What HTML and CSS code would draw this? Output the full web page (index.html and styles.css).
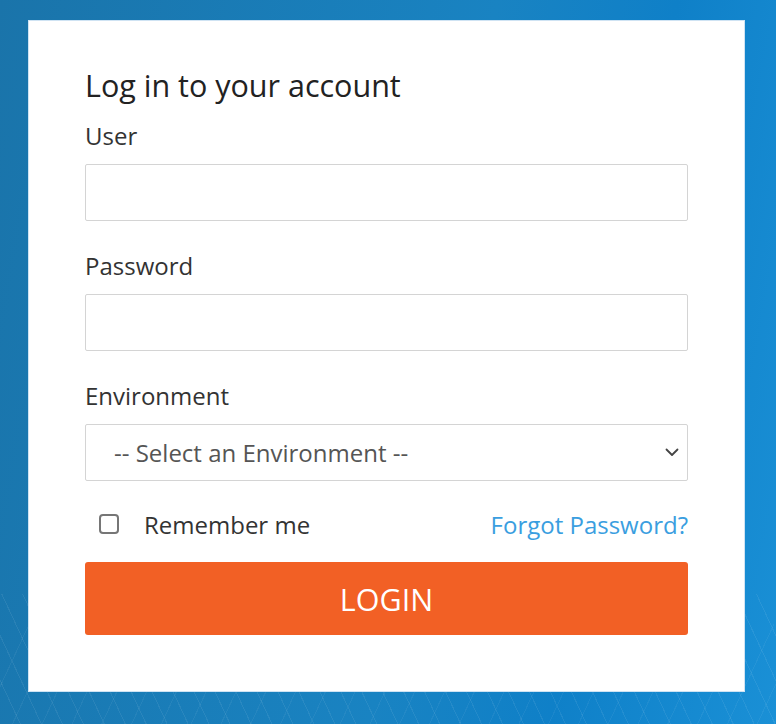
FILE: index.html
```html
<!DOCTYPE html>
<html>
<head>
<meta charset="utf-8">
<link rel="stylesheet" href="styles.css">
</head>
<body>
<div class="page">
  <div class="card">
    <h1 class="title">Log in to your account</h1>
    <div class="field">
      <label class="label">User</label>
      <input class="input" type="text">
    </div>
    <div class="field">
      <label class="label">Password</label>
      <input class="input" type="password">
    </div>
    <div class="field">
      <label class="label">Environment</label>
      <div class="select">
        <span class="select-text">-- Select an Environment --</span>
        <svg class="chevron" width="14" height="9" viewBox="0 0 14 9"><path d="M1.5 1.5 L7 7 L12.5 1.5" fill="none" stroke="#444" stroke-width="1.8" stroke-linecap="round" stroke-linejoin="round"/></svg>
      </div>
    </div>
    <div class="row">
      <label class="remember"><span class="checkbox"></span><span>Remember me</span></label>
      <a class="forgot">Forgot Password?</a>
    </div>
    <button class="login">LOGIN</button>
  </div>
</div>
</body>
</html>
```
FILE: styles.css
```css
html, body {
  margin: 0;
  padding: 0;
  height: 100%;
}
body {
  font-family: "Open Sans", "Noto Sans", sans-serif;
  background:
    repeating-linear-gradient(65deg, rgba(255,255,255,0) 0 18px, rgba(255,255,255,0.07) 18px 19px) left bottom / 100% 130px no-repeat,
    repeating-linear-gradient(115deg, rgba(255,255,255,0) 0 26px, rgba(255,255,255,0.05) 26px 27px) left bottom / 100% 100px no-repeat,
    linear-gradient(100deg, #1a74aa 0%, #1983c2 55%, #0f80c8 75%, #1a90d6 100%);
  overflow: hidden;
}
.page {
  padding: 20px 0 0 28px;
}
.card {
  width: 717px;
  height: 672px;
  box-sizing: border-box;
  background: #fff;
  border: 1px solid #cfe3f3;
  padding: 44px 56px 0 56px;
}
.title {
  margin: 0 0 15px 0;
  font-size: 30.5px;
  font-weight: 400;
  color: #222;
  line-height: 40px;
}
.field {
  display: flex;
  flex-direction: column;
}
.label {
  font-size: 24px;
  color: #333;
  line-height: 32px;
}
.input {
  height: 57px;
  box-sizing: border-box;
  border: 1px solid #d4d4d4;
  border-radius: 2px;
  margin: 12px 0 29px 0;
  font-size: 20px;
  padding: 0 12px;
}
.select {
  height: 57px;
  box-sizing: border-box;
  border: 1px solid #d4d4d4;
  border-radius: 2px;
  margin-top: 12px;
  display: flex;
  align-items: center;
  justify-content: space-between;
  padding: 0 8px 0 28px;
}
.select-text {
  font-size: 24px;
  color: #555;
}
.row {
  display: flex;
  justify-content: space-between;
  align-items: center;
  margin-top: 26px;
  height: 34px;
}
.remember {
  display: flex;
  align-items: center;
  font-size: 24px;
  color: #333;
}
.checkbox {
  width: 20px;
  height: 20px;
  box-sizing: border-box;
  border: 2px solid #767676;
  border-radius: 4px;
  margin: 0 25px 0 14px;
}
.forgot {
  font-size: 24px;
  color: #3a9ee0;
}
.login {
  display: block;
  width: 100%;
  height: 73px;
  margin-top: 21px;
  border: none;
  border-radius: 3px;
  background: #f26025;
  color: #fff;
  font-family: "Open Sans", "Noto Sans", sans-serif;
  font-size: 30.5px;
  padding: 0;
}
```
